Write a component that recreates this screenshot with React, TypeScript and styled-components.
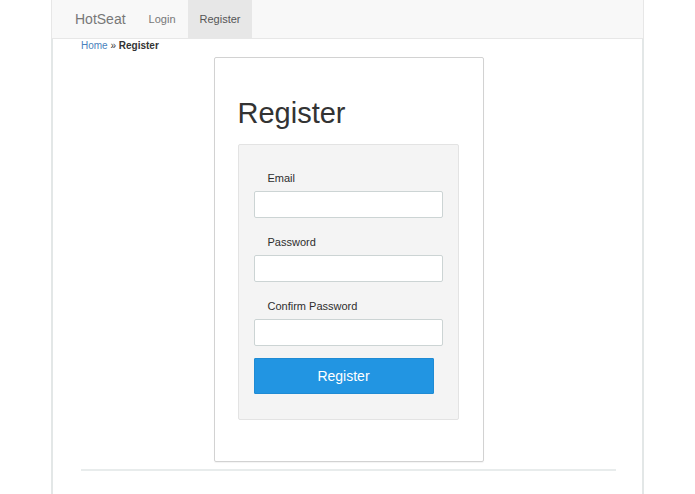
import styled, { createGlobalStyle } from "styled-components";

const GlobalStyle = createGlobalStyle`
    html, body {
        margin: 0;
        padding: 0;
        background: #fff;
    }
    body {
        font-family: "Liberation Sans", Arial, sans-serif;
        color: #333;
    }
    * {
        box-sizing: border-box;
    }
`;

const Page = styled.div`
    width: 593px;
    margin-left: 51px;
`;

const Navbar = styled.nav`
    display: flex;
    align-items: stretch;
    height: 39px;
    padding-left: 23px;
    background: #f8f8f8;
    border: 1px solid #e7e7e7;
    border-top: none;
`;

const Brand = styled.a`
    display: flex;
    align-items: center;
    padding-right: 11px;
    font-size: 14px;
    color: #777;
    text-decoration: none;
`;

const NavLink = styled.a<{ $active?: boolean }>`
    display: flex;
    align-items: center;
    padding: 0 12px;
    font-size: 11px;
    color: ${(p) => (p.$active ? "#555" : "#777")};
    background: ${(p) => (p.$active ? "#e7e7e7" : "transparent")};
    text-decoration: none;
`;

const Content = styled.main`
    min-height: calc(100vh - 39px);
    padding: 0 26px 0 28px;
    border-left: 2px solid #e3e7e7;
    border-right: 2px solid #e3e7e7;
`;

const Breadcrumb = styled.div`
    padding-top: 1px;
    font-size: 10px;
    line-height: 12px;

    a {
        color: #4a82bd;
        text-decoration: none;
    }
    strong {
        color: #333;
    }
`;

const Card = styled.section`
    width: 270px;
    margin: 5px auto 0;
    padding: 39px 24px 41px 23px;
    border: 1px solid #d2d2d2;
    border-radius: 2px;
    box-shadow: 0 1px 1px rgba(0, 0, 0, 0.05);
`;

const Heading = styled.h1`
    margin: 0 0 15px;
    font-size: 29px;
    font-weight: normal;
    line-height: 32px;
    color: #333;
`;

const Well = styled.form`
    display: flex;
    flex-direction: column;
    padding: 26px 15px 25px;
    background: #f4f4f4;
    border: 1px solid #e3e3e3;
    border-radius: 2px;
`;

const Field = styled.div`
    display: flex;
    flex-direction: column;
    gap: 6px;
    margin-bottom: 17px;

    &:last-of-type {
        margin-bottom: 12px;
    }
`;

const Label = styled.label`
    margin-left: 14px;
    font-size: 11px;
    line-height: 14px;
    color: #2e2e2e;
`;

const Input = styled.input`
    width: 189px;
    height: 27px;
    padding: 0 6px;
    font: inherit;
    background: #fff;
    border: 1px solid #ccd4d4;
    border-radius: 2px;
    outline: none;
`;

const SubmitButton = styled.button`
    width: 180px;
    height: 36px;
    font-family: inherit;
    font-size: 14px;
    color: #fff;
    background: #2295e2;
    border: 1px solid #1f8bd4;
    border-radius: 1px;
    cursor: pointer;
`;

const Divider = styled.hr`
    margin: 7px 0 0;
    border: none;
    border-top: 2px solid #e8ecec;
`;

const fields = [
    { id: "email", label: "Email", type: "email" },
    { id: "password", label: "Password", type: "password" },
    { id: "confirm", label: "Confirm Password", type: "password" },
];

export default function App() {
    return (
        <>
            <GlobalStyle />
            <Page>
                <Navbar>
                    <Brand href="#">HotSeat</Brand>
                    <NavLink href="#">Login</NavLink>
                    <NavLink href="#" $active>
                        Register
                    </NavLink>
                </Navbar>
                <Content>
                    <Breadcrumb>
                        <a href="#">Home</a> » <strong>Register</strong>
                    </Breadcrumb>
                    <Card>
                        <Heading>Register</Heading>
                        <Well onSubmit={(e) => e.preventDefault()}>
                            {fields.map((f) => (
                                <Field key={f.id}>
                                    <Label htmlFor={f.id}>{f.label}</Label>
                                    <Input id={f.id} type={f.type} />
                                </Field>
                            ))}
                            <SubmitButton type="submit">Register</SubmitButton>
                        </Well>
                    </Card>
                    <Divider />
                </Content>
            </Page>
        </>
    );
}
